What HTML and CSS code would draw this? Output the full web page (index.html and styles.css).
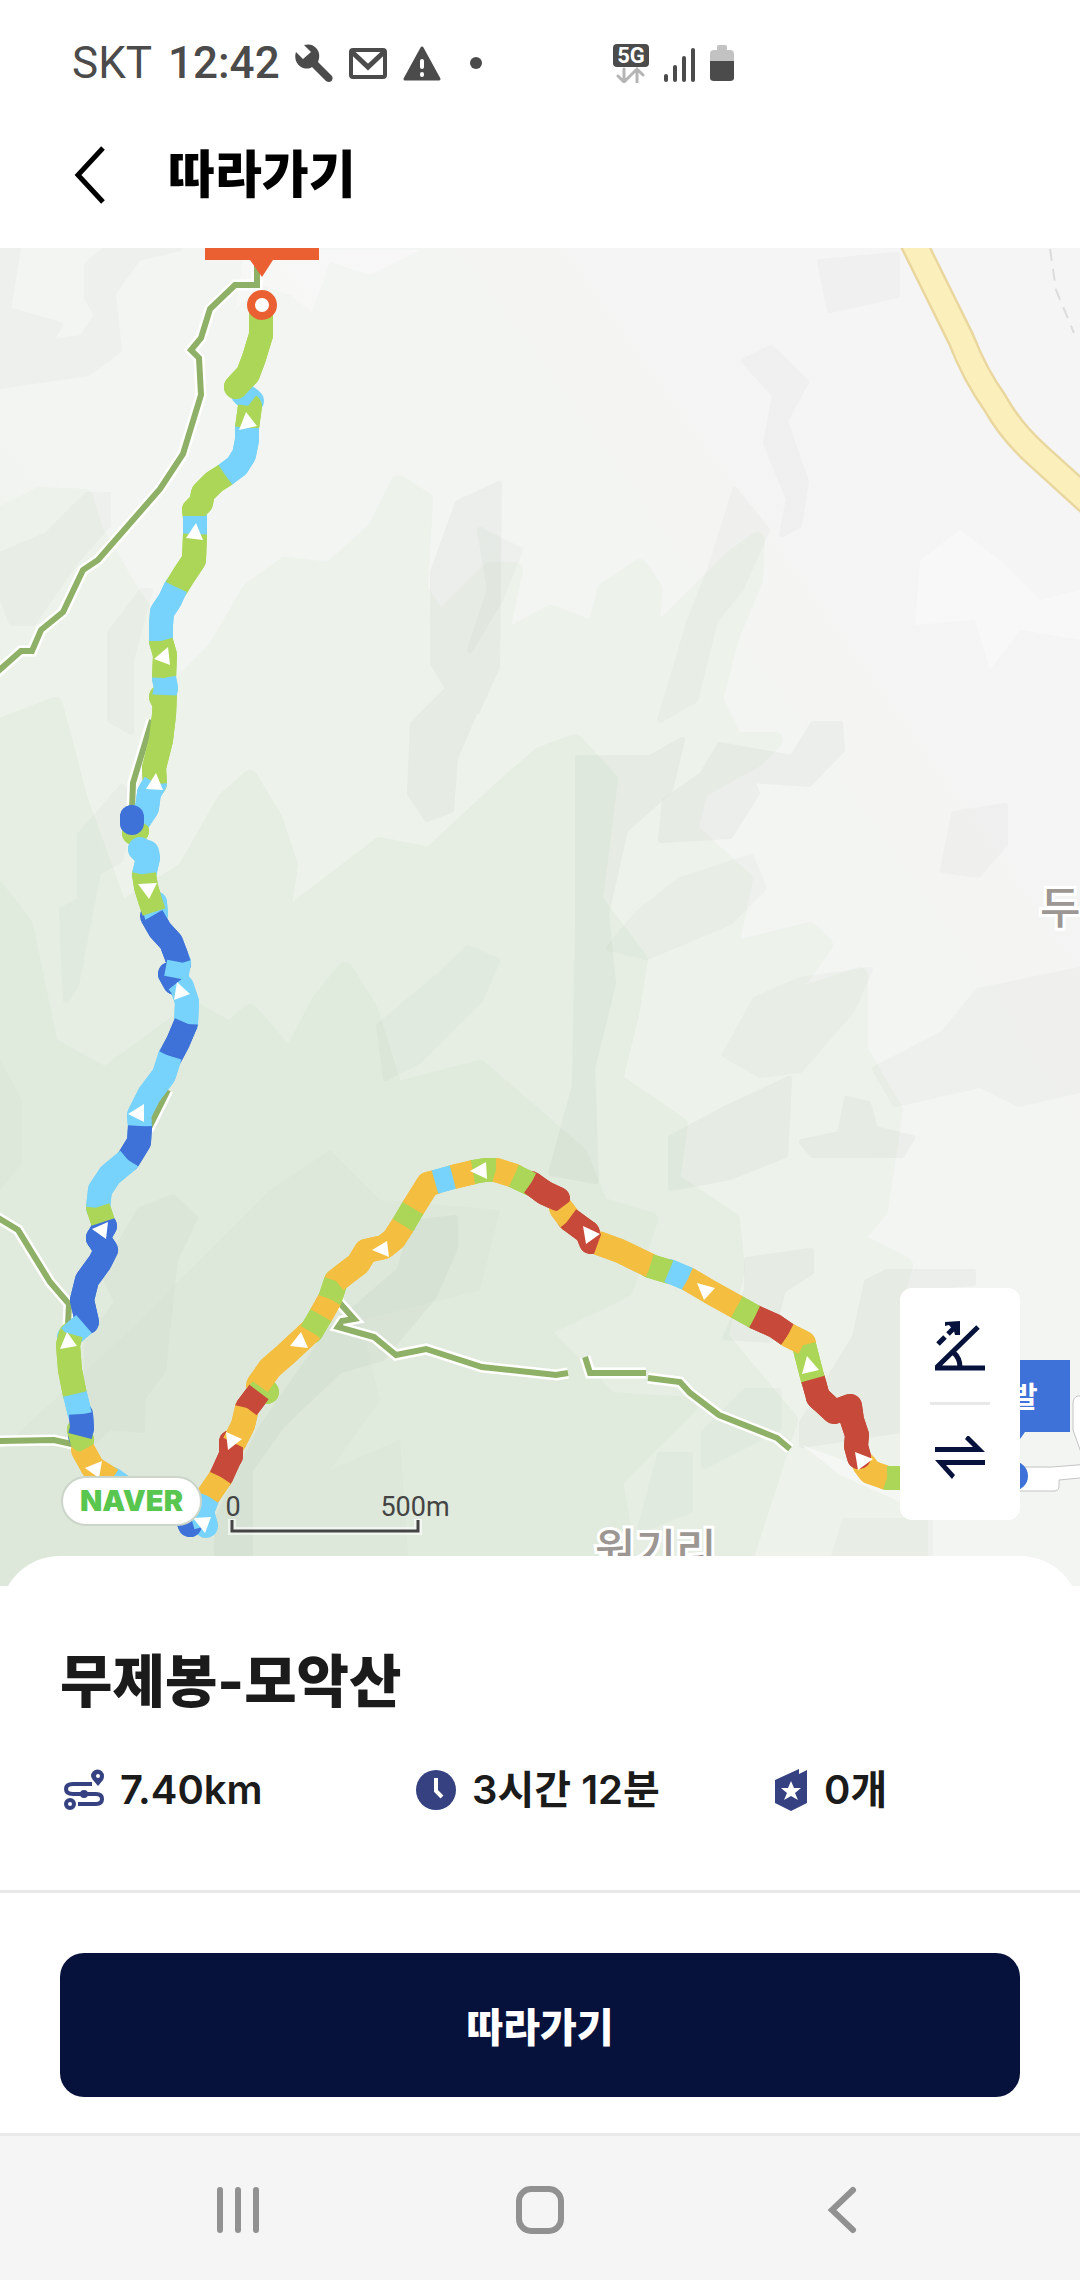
FILE: index.html
```html
<!DOCTYPE html>
<html lang="ko">
  <head>
    <meta charset="UTF-8" />
    <meta name="viewport" content="width=device-width, initial-scale=1.0" />
    <title>따라가기</title>
    <link rel="stylesheet" href="styles.css">
  </head>
  <body>
    <div class="status-bar">
      <span class="carrier">SKT</span>
      <span class="clock">12:42</span>
      <svg class="status-icon" width="40" height="40" viewBox="0 0 40 40">
        <path d="M10 2 L17 9 L9 16 L2 9 C0 15 2 21 7 24 C11 26 15 26 18 24 L32 38 C36 41 40 37 38 33 L24 19 C26 14 26 8 21 4 C18 1 14 1 10 2 Z" fill="#4b4b4b" />
      </svg>
      <svg class="status-icon" width="40" height="40" viewBox="0 0 40 40">
        <rect x="3" y="7" width="34" height="27" rx="2" fill="none" stroke="#4b4b4b" stroke-width="4" />
        <path d="M4 9 L20 24 L36 9" fill="none" stroke="#4b4b4b" stroke-width="5" />
      </svg>
      <svg class="status-icon" width="40" height="40" viewBox="0 0 40 40">
        <path d="M20 5 L37 36 H3 Z" fill="#4b4b4b" stroke="#4b4b4b" stroke-width="3" stroke-linejoin="round" />
        <path d="M20 18 V24 M20 31 V32" stroke="#fff" stroke-width="4" stroke-linecap="round" />
      </svg>
      <span class="dot"></span>
      <div class="status-right">
        <svg width="38" height="40" viewBox="0 0 38 40">
          <rect x="1" y="1" width="36" height="23" rx="4" fill="#4b4b4b" />
          <text x="19" y="20" class="network">5G</text>
          <path d="M12 26 V39 M6 33 L12 39 L18 33 M25 39 V26 M19 32 L25 26 L31 32" fill="none" stroke="#b5b5b5" stroke-width="3" stroke-linecap="round" />
        </svg>
        <svg width="36" height="40" viewBox="0 0 36 40">
          <path d="M4 33 V37 M13 24 V37 M22 15 V37 M31 7 V37" stroke="#4b4b4b" stroke-width="4" stroke-linecap="round" />
        </svg>
        <svg width="24" height="40" viewBox="0 0 24 40">
          <path d="M0 19 V11 Q0 7 4 7 H7 V4 Q7 2 9 2 H15 Q17 2 17 4 V7 H20 Q24 7 24 11 V19 Z" fill="#c2c2c2" />
          <path d="M0 18 H24 V35 Q24 38 20 38 H4 Q0 38 0 35 Z" fill="#4b4b4b" />
        </svg>
      </div>
    </div>

    <header class="header">
      <button class="back-button" aria-label="뒤로">
        <svg width="34" height="60" viewBox="0 0 34 60">
          <path d="M31 3 L6 30 L31 57" fill="none" stroke="#000" stroke-width="5" />
        </svg>
      </button>
      <h1>따라가기</h1>
    </header>

    <main>
      <section class="map">
        <svg class="map-canvas" viewBox="0 248 1080 1338" preserveAspectRatio="xMidYMid slice">
          <defs>
            <linearGradient id="ground" x1="0.900" y1="0.200" x2="0" y2="1">
              <stop offset="0" stop-color="#f4f5f4" />
              <stop offset="0.500" stop-color="#f2f5f1" />
              <stop offset="1" stop-color="#e4ece1" />
            </linearGradient>
          </defs>

          <!-- terrain -->
          <rect y="248" width="1080" height="1338" fill="url(#ground)" />
          <path class="hill low" d="M-10 520 L40 495 L85 497 L95 530 L130 590 L150 620 L175 690 L215 650 L250 590 L285 565 L330 570 L375 530 L399 483 L425 500 L420 590 L440 620 L490 570 L515 570 L500 640 L551 613 L595 630 L605 590 L640 567 L655 590 L650 640 L690 600 L730 560 L757 540 L755 580 L730 640 L715 700 L735 740 L775 740 L755 760 L700 790 L690 830 L745 880 L730 950 L810 930 L825 945 L785 1000 L860 975 L860 1050 L895 1110 L880 1210 L855 1240 L905 1265 L895 1300 L920 1520 L920 1600 L-10 1600 Z" />
          <path class="hill mid" d="M-10 730 L55 705 L80 800 L120 910 L185 870 L225 800 L250 778 L275 820 L290 865 L282 920 L380 845 L430 855 L500 790 L540 755 L575 742 L610 780 L595 900 L640 960 L632 1010 L615 1080 L680 1125 L672 1180 L732 1220 L737 1270 L720 1337 L790 1420 L732 1600 L-10 1600 Z" />
          <path class="hill high" d="M-10 880 L25 925 L50 1045 L105 1075 L195 1010 L230 1030 L250 1012 L290 1058 L320 1000 L345 970 L370 1010 L395 1090 L480 1068 L580 1155 L600 1205 L650 1220 L625 1290 L540 1330 L610 1400 L690 1405 L615 1480 L635 1600 L-10 1600 Z" />
          <path class="hill top" d="M0 1060 L22 1100 L22 1163 L0 1190 Z M130 1330 L270 1190 L330 1150 L380 1200 L500 1210 L480 1290 L360 1320 L380 1400 L330 1470 L400 1440 L410 1586 L0 1586 L0 1450 Z" />
          <path class="shade" d="M458 503 L499 484 L497 667 L477 711 L455 700 L433 663 L433 572 Z M448 689 L475 711 L455 758 L451 810 L427 819 L410 793 L413 724 Z" />
          <path class="shade" d="M720 745 L792 758 L813 724 L840 724 L842 750 L809 784 L751 780 L757 793 L730 836 L661 840 L665 801 L702 775 Z" />
          <path class="shade faint" d="M637 914 L680 880 L751 857 L764 888 L730 922 L647 957 L609 948 Z" />
          <path class="shade" d="M578 758 L650 758 L682 740 L670 790 L625 830 L606 914 L613 983 L592 1069 L596 1181 L551 1173 L575 1086 L578 931 Z" />
          <path class="shade faint" d="M744 361 L771 348 L806 382 L785 421 L806 482 L799 525 L782 534 L789 499 L766 443 L775 395 Z" />
          <path class="shade" d="M671 1138 L727 1108 L789 1079 L785 1155 L730 1177 L709 1181 L671 1188 Z M802 1142 L840 1134 L847 1099 L868 1104 L875 1129 L912 1138 L902 1155 L813 1155 Z" />
          <path class="shade faint" d="M954 814 L1005 806 L1005 844 L978 875 L943 870 Z M875 1069 L943 1034 L978 991 L1080 970 L1080 1090 L1019 1104 L980 1085 L895 1104 Z M755 1000 L800 980 L870 970 L852 1010 L800 1070 L760 1075 L725 1055 Z M820 262 L897 255 L897 295 L830 310 Z" />
          <path class="shade faint" d="M735 490 L767 530 L740 590 L715 620 L695 700 L660 720 L690 620 L710 570 Z M480 530 L520 550 L500 600 L470 650 L490 590 Z" />
          <path class="shade faint" d="M468 948 L497 961 L480 1000 L420 1060 L386 1078 L379 1026 L441 974 Z" />
          <path class="shade faint" d="M0 555 L47 535 L87 495 L108 495 L108 525 L75 562 L33 623 L12 623 L0 593 Z M110 633 L142 591 L150 591 L131 660 L131 732 L110 720 Z M80 835 L122 787 L135 800 L120 860 L98 872 L76 985 L66 1000 L62 910 L80 900 Z" />
          <path class="shade faint" d="M87 265 L107 248 L180 248 L138 258 L113 293 L119 350 L88 373 L0 386 L0 350 L82 338 L97 315 L87 298 Z M0 248 H18 L8 310 L60 325 L50 342 L0 350 Z" />
          <path class="shade faint" d="M173 1197 L195 1218 L175 1260 L163 1370 L143 1397 L142 1430 L110 1427 L87 1447 L87 1343 L117 1302 L103 1273 L140 1210 Z" />
          <path class="shade" d="M413 1223 L455 1218 L455 1248 L434 1296 L382 1358 L340 1370 L282 1425 L250 1470 L250 1586 L217 1586 L217 1520 L260 1430 L330 1330 L400 1270 Z" />
          <path class="shade" d="M747 1260 L811 1251 L811 1272 L783 1290 L770 1340 L726 1337 L747 1290 Z M867 1282 L887 1272 L973 1272 L973 1283 L900 1289 L900 1430 L802 1445 L802 1423 L855 1337 Z" />
          <path class="shade faint" d="M704 1433 L746 1391 L779 1391 L779 1428 L704 1466 Z M660 1455 L690 1455 L690 1510 L640 1530 Z M845 1521 L930 1521 L930 1586 L825 1586 Z" />
          <path class="clearing" d="M802 1445 L870 1470 L900 1480 L900 1502 L840 1475 Z M245 250 L420 250 L370 275 L330 262 L312 312 L290 295 L262 285 L235 310 Z M920 560 L960 530 L1000 560 L1040 600 L1080 590 L1080 640 L1020 630 L990 670 L975 620 L915 625 Z" />

          <!-- roads -->
          <path class="road-edge" d="M912 240 L961 339 Q975 375 995 403 Q1010 430 1035 453 L1090 503" />
          <path class="road" d="M912 240 L961 339 Q975 375 995 403 Q1010 430 1035 453 L1090 503" />
          <path d="M1050 249 L1056 290 L1074 333" fill="none" stroke="#dcdcdc" stroke-width="2" stroke-dasharray="12 8" />
          <path class="alley" d="M1010 1467 H1052 L1090 1464 V1477 L1059 1480 V1486 Q1059 1491 1054 1491 H1010 Z M1090 1396 H1078 Q1073 1397 1073 1404 V1430 L1082 1455 H1090 Z" />

          <!-- trails -->
          <g class="trail-halo">
            <path d="M257 248 V285 H235 L210 309 L201 338 L191 350 L199 358 L201 395 L183 454 L160 489 L98 560 L83 570 L63 612 L41 630 L32 651 L21 651 L-5 674" />
            <path d="M152 720 L133 783 L132 810 M168 1090 L148 1130" />
            <path d="M-5 1216 L18 1230 L50 1282 L69 1304 L68 1325 M-5 1441 L54 1440 L76 1445" />
            <path d="M338 1301 L354 1319 L342 1321 L338 1327 L374 1337 L396 1355 L426 1349 L482 1367 L556 1375 L568 1373" />
            <path d="M585 1357 L590 1373 H646 M648 1378 L680 1382 L690 1393 L719 1415 L777 1438 L790 1449" />
          </g>
          <g class="trail">
            <path d="M257 248 V285 H235 L210 309 L201 338 L191 350 L199 358 L201 395 L183 454 L160 489 L98 560 L83 570 L63 612 L41 630 L32 651 L21 651 L-5 674" />
            <path d="M152 720 L133 783 L132 810 M168 1090 L148 1130" />
            <path d="M-5 1216 L18 1230 L50 1282 L69 1304 L68 1325 M-5 1441 L54 1440 L76 1445" />
            <path d="M338 1301 L354 1319 L342 1321 L338 1327 L374 1337 L396 1355 L426 1349 L482 1367 L556 1375 L568 1373" />
            <path d="M585 1357 L590 1373 H646 M648 1378 L680 1382 L690 1393 L719 1415 L777 1438 L790 1449" />
          </g>

          <text class="place" x="1040" y="924">두</text>
          <text class="place" x="595" y="1566">원기리</text>

          <!-- course, coloured by slope; the rounded copy below fills the bends between segments -->
          <use class="course-base" href="#course" />
          <g id="course" class="course">
            <path class="down" d="M243 394 L252 401" />
            <path class="flat" d="M250 406 L247 428" />
            <path class="flat round" d="M261 312 V335 L254 358 L248 374 L236 387" />
            <path class="down" d="M247 428 V440 L244 455 L237 466 L225 475" />
            <path class="flat" d="M225 475 L214 482 L203 493 L201 503 L194 510 L195 517" />
            <path class="down" d="M195 516 V535" />
            <path class="flat" d="M195 534 L194 560 L184 575 L176 588" />
            <path class="down" d="M176 587 L170 600 L162 612 L161 625 V641" />
            <path class="flat" d="M161 641 L165 655 L164 678" />
            <path class="flat round" d="M161 697 L164 703" />
            <path class="down" d="M164 678 L166 688 L164 697" />
            <path class="flat" d="M165 695 L164 715 L161 740 L154 768 L155 784" />
            <path class="flat round" d="M134 833 L137 831" />
            <path class="down" d="M155 783 L149 793 L147 808 L139 820" />
            <path class="steep-down round" d="M132 817 L132 823" />
            <path class="down round" d="M140 849 L147 856" />
            <path class="down" d="M147 852 L148 858 L144 875" />
            <path class="down round" d="M155 903 L156 914" />
            <path class="flat" d="M144 874 L146 887 L150 900 L154 912" />
            <path class="steep-down" d="M152 916 L160 930 L171 942 L176 955 L179 964" />
            <path class="steep-down round" d="M170 974 L175 983" />
            <path class="down" d="M179 962 L176 978" />
            <path class="down" d="M178 982 L182 987 L187 1002 L186 1024" />
            <path class="steep-down" d="M186 1023 L178 1042 L170 1057" />
            <path class="down" d="M170 1056 L164 1075 L149 1095 L139 1115 L140 1127" />
            <path class="steep-down" d="M140 1126 L139 1142 L128 1160" />
            <path class="down" d="M128 1160 L110 1175 L100 1190 L98 1208" />
            <path class="steep-down round" d="M105 1226 L98 1238" />
            <path class="flat" d="M98 1207 L103 1222" />
            <path class="steep-down round" d="M98 1238 L106 1250 L100 1262 L87 1280 L82 1300 L87 1322" />
            <path class="down" d="M84 1324 L69 1337" />
            <path class="flat" d="M71 1334 L68 1345 L70 1370 L75 1395" />
            <path class="down" d="M75 1394 L80 1415" />
            <path class="flat round" d="M79 1430 L82 1440" />
            <path class="steep-down" d="M81 1414 L82 1428 L80 1436" />
            <path class="up" d="M83 1450 L93 1468 L112 1480" />
            <path class="down" d="M112 1479 L130 1492" />
            <path class="steep-down round" d="M186 1515 L190 1525" />
            <path class="down" d="M208 1496 L202 1512 L206 1526" />
            <path class="up" d="M208 1496 L221 1477" />
            <path class="steep-up round" d="M231 1442 L231 1456" />
            <path class="steep-up" d="M231 1455 L221 1477" />
            <path class="up" d="M234 1443 L243 1425 L247 1408" />
            <path class="flat round" d="M260 1391 L267 1392" />
            <path class="steep-up" d="M247 1408 L259 1392" />
            <path class="up" d="M258 1385 L270 1368 L285 1355 L312 1330" />
            <path class="flat" d="M311 1332 L321 1315" />
            <path class="up" d="M321 1315 L330 1299" />
            <path class="flat" d="M330 1299 L336 1281" />
            <path class="up" d="M336 1281 L346 1273 L358 1264 L366 1251 L384 1247 L394 1239 L403 1225" />
            <path class="flat" d="M403 1225 L413 1208" />
            <path class="up" d="M413 1208 L428 1184 L436 1182" />
            <path class="down" d="M435 1182 L453 1177" />
            <path class="up" d="M453 1177 L474 1172" />
            <path class="flat" d="M473 1172 L485 1170 H496" />
            <path class="up" d="M496 1170 L515 1176" />
            <path class="flat" d="M514 1176 L531 1184" />
            <path class="steep-up round" d="M542 1191 L545 1193 L558 1199" />
            <path class="steep-up" d="M531 1183 L545 1193" />
            <path class="up" d="M561 1208 L570 1220" />
            <path class="steep-up" d="M569 1219 L588 1233" />
            <path class="steep-up round" d="M587 1232 L591 1242" />
            <path class="up" d="M598 1243 L620 1251 L651 1266" />
            <path class="flat" d="M650 1266 L670 1272" />
            <path class="down" d="M669 1271 L688 1279" />
            <path class="up" d="M688 1279 L710 1292 L737 1307" />
            <path class="flat" d="M737 1307 L755 1317" />
            <path class="steep-up" d="M755 1317 L775 1326 L788 1335" />
            <path class="flat" d="M804 1345 L813 1380" />
            <path class="up" d="M788 1335 L804 1343" />
            <path class="up" d="M864 1464 L870 1472 L887 1478" />
            <path class="steep-up round" d="M818 1397 L834 1412 L850 1406 L852 1420 L857 1435 L856 1446 L859 1457" />
            <path class="steep-up" d="M813 1379 L818 1397 L822 1401" />
            <path class="flat" d="M887 1478 H915" />
          </g>

          <!-- direction arrows -->
          <path fill="#fff" d="M246 412 L257 426 L239 430 Z M196 523 L203 540 L186 538 Z M168 647 L154 659 L170 665 Z M156 773 L163 790 L146 789 Z M138 884 L157 883 L149 899 Z M177 982 L190 994 L174 1000 Z M144 1104 L128 1114 L144 1122 Z M92 1229 L108 1222 L106 1239 Z M67 1332 L77 1346 L60 1349 Z M85 1468 L102 1461 L99 1478 Z M193 1518 L211 1517 L205 1533 Z M226 1432 L242 1439 L228 1450 Z M301 1332 L308 1348 L290 1346 Z M387 1241 L372 1250 L389 1257 Z M486 1162 L470 1171 L487 1179 Z M583 1226 L600 1234 L586 1244 Z M697 1283 L715 1288 L704 1300 Z M807 1356 L819 1370 L802 1374 Z M855 1452 L873 1459 L858 1470 Z" />

          <!-- finish and start flags -->
          <path fill="#ea6033" d="M205 240 H319 V260 H273 L262 277 L250 260 H205 Z" />
          <circle cx="262" cy="305" r="11" fill="#fff" stroke="#ea6033" stroke-width="8" />
          <path fill="#3f72d8" d="M956 1360 H1070 V1432 H1025 L1013 1449 L1001 1432 H956 Z" />
          <circle cx="1013" cy="1476" r="11" fill="#fff" stroke="#3f72d8" stroke-width="8" />
          <text class="flag-text" x="1011" y="1408">출발</text>

          <!-- scale -->
          <text class="scale-text" x="233" y="1516">0</text>
          <text class="scale-text" x="415" y="1516">500m</text>
          <path d="M232 1519 V1531 H418 V1519" fill="none" stroke="#fff" stroke-opacity="0.600" stroke-width="8" />
          <path d="M232 1520 V1531 H418 V1520" fill="none" stroke="#444" stroke-width="3" />
        </svg>

        <a class="naver" href="#">NAVER</a>

        <div class="map-controls">
          <button aria-label="경사도">
            <svg width="52" height="52" viewBox="0 0 52 52">
              <path d="M1 48 H51 M3 47 L44 7 M19 32 Q26 38 26 47 M4 24 L11 17 M14 14 L21 7" fill="none" stroke="#06113c" stroke-width="5" />
              <path d="M11 2 L26 1 V15 H21 L20 11 L15 5 L11 6 Z" fill="#06113c" />
            </svg>
          </button>
          <button aria-label="방향 전환">
            <svg width="52" height="52" viewBox="0 0 52 52">
              <path d="M1 16 H51 L34 -1 L31 3 L39 11 H1 Z M51 24 H1 L18 43 L21 39 L12 29 H51 Z" fill="#06113c" />
            </svg>
          </button>
        </div>
      </section>

      <section class="sheet">
        <h2>무제봉-모악산</h2>
        <ul class="stats">
          <li>
            <svg width="48" height="48" viewBox="0 0 48 48">
              <path d="M32 18 H13 Q6 18 6 23 Q6 28 13 28 H36 Q42 28 42 33 Q42 38 36 38 H18" fill="none" stroke="#354180" stroke-width="4" />
              <circle cx="24" cy="28" r="4" fill="#354180" />
              <circle cx="10" cy="38" r="4" fill="none" stroke="#354180" stroke-width="4" />
              <path d="M38 20 L33 14 Q31 11 31 10 A6 6 0 0 1 44 10 Q44 12 43 14 Z" fill="#354180" />
              <circle cx="38" cy="10" r="2" fill="#fff" />
            </svg>
            7.40km
          </li>
          <li>
            <svg width="48" height="48" viewBox="0 0 48 48">
              <circle cx="24" cy="24" r="20" fill="#354180" />
              <path d="M24 12 V25 L30 31" fill="none" stroke="#fff" stroke-width="4" />
            </svg>
            3시간 12분
          </li>
          <li>
            <svg width="48" height="48" viewBox="0 0 48 48">
              <path d="M11 14 L35 3 V8 L43 4 V37 L27 45 L11 37 Z" fill="#354180" />
              <path d="M27 15 L30 22 L37 22 L31 27 L34 34 L27 30 L20 34 L23 27 L17 22 L24 22 Z" fill="#fff" />
            </svg>
            0개
          </li>
        </ul>
      </section>

      <div class="action">
        <button class="follow-button">따라가기</button>
      </div>
    </main>

    <nav class="nav-bar">
      <button aria-label="최근 앱">
        <svg width="52" height="52" viewBox="0 0 52 52">
          <path d="M8 6 V46 M26 6 V46 M44 6 V46" stroke="#919191" stroke-width="6" stroke-linecap="round" />
        </svg>
      </button>
      <button aria-label="홈">
        <svg width="52" height="52" viewBox="0 0 52 52">
          <rect x="5" y="5" width="42" height="42" rx="12" fill="none" stroke="#919191" stroke-width="6" />
        </svg>
      </button>
      <button aria-label="뒤로">
        <svg width="52" height="52" viewBox="0 0 52 52">
          <path d="M37 6 L16 26 L37 46" fill="none" stroke="#919191" stroke-width="6" stroke-linecap="round" />
        </svg>
      </button>
    </nav>
  </body>
</html>
```
FILE: styles.css
```css
* {
  box-sizing: border-box;
}

body {
  margin: 0;
  background-color: #fff;
  color: #1b1b1b;
  font-family: Inter, "Noto Sans CJK KR", sans-serif;
}

button {
  padding: 0;
  border: none;
  background: none;
  font-family: inherit;
  cursor: pointer;
}

svg {
  display: block;
  flex-shrink: 0;
}

/* status bar */
.status-bar {
  display: flex;
  align-items: center;
  height: 106px;
  padding: 20px 72px 0;
  color: #4b4b4b;
  font-family: Roboto, sans-serif;
  font-size: 44px;
}

.clock {
  margin-left: 16px;
  margin-right: 14px;
  font-weight: 500;
}

.status-icon {
  margin-right: 14px;
}

.dot {
  width: 12px;
  height: 12px;
  margin-left: 14px;
  border-radius: 50%;
  background-color: #4b4b4b;
}

.status-right {
  display: flex;
  gap: 12px;
  margin-left: 130px;
}

.network {
  fill: #fff;
  font-size: 22px;
  font-weight: 700;
  text-anchor: middle;
}

/* header */
.header {
  display: flex;
  align-items: center;
  height: 142px;
  padding: 0 72px 4px;
  color: #000;
}

h1 {
  margin: 0 0 0 62px;
  font-size: 51px;
  font-weight: 900;
  line-height: 72px;
}

/* map */
.map {
  position: relative;
}

.map-canvas {
  width: 100%;
  height: auto;
}

.hill {
  stroke-width: 16;
  stroke-linejoin: round;
}

.hill.low {
  fill: #edf2eb;
  stroke: #edf2eb;
}

.hill.mid {
  fill: #e6eee3;
  stroke: #e6eee3;
}

.hill.high {
  fill: #e0eadd;
  stroke: #e0eadd;
}

.hill.top {
  fill: #dce7d8;
  opacity: 0.7;
}

.shade {
  fill: #6e8270;
  stroke: #6e8270;
  stroke-width: 6;
  stroke-linejoin: round;
  opacity: 0.05;
}

.shade.faint {
  opacity: 0.03;
}

.clearing {
  fill: #f8f9f8;
  opacity: 0.7;
}

.road-edge,
.road {
  fill: none;
  stroke: #e9d79f;
  stroke-width: 28;
  stroke-linejoin: round;
}

.road {
  stroke: #fbf0bc;
  stroke-width: 23;
}

.alley {
  fill: #fff;
  stroke: #c4c4c4;
  stroke-width: 1;
}

.trail-halo,
.trail {
  fill: none;
  stroke: #fff;
  stroke-width: 11;
}

.trail {
  stroke: #8fb067;
  stroke-width: 6;
}

.place {
  fill: #9d9793;
  stroke: #fff;
  stroke-width: 6;
  paint-order: stroke;
  font-size: 44px;
  font-weight: 500;
}

.course-base {
  stroke-linecap: round;
}

.course {
  fill: none;
  stroke-width: 24;
  stroke-linejoin: round;
}

.course .round {
  stroke-linecap: round;
}

.flat {
  stroke: #abd657;
}

.down {
  stroke: #77d3fb;
}

.steep-down {
  stroke: #3f72d8;
}

.up {
  stroke: #f4be41;
}

.steep-up {
  stroke: #c74939;
}

.flag-text {
  fill: #fff;
  font-size: 29px;
  font-weight: 700;
  text-anchor: middle;
}

.scale-text {
  fill: #444;
  font-family: Roboto, sans-serif;
  font-size: 27px;
  text-anchor: middle;
}

.naver {
  position: absolute;
  left: 61px;
  bottom: 60px;
  padding: 0 17px;
  border: 2px solid #cbd5c9;
  border-radius: 26px;
  background-color: #fff;
  color: #58c64f;
  font-size: 29px;
  font-weight: 900;
  line-height: 46px;
  text-decoration: none;
}

.map-controls {
  position: absolute;
  right: 60px;
  bottom: 66px;
  width: 120px;
  border-radius: 12px;
  background-color: #fff;
}

.map-controls button {
  display: flex;
  align-items: center;
  justify-content: center;
  width: 100%;
  height: 116px;
}

.map-controls button + button::before {
  content: "";
  position: absolute;
  top: 114px;
  left: 30px;
  right: 30px;
  height: 3px;
  background-color: #e8e8e8;
}

/* course info */
.sheet {
  position: relative;
  margin-top: -30px;
  padding: 84px 60px 76px;
  border-bottom: 3px solid #e8e8e8;
  border-radius: 60px 60px 0 0;
  background-color: #fff;
}

h2 {
  margin: 0;
  font-size: 57px;
  font-weight: 800;
  line-height: 84px;
}

.stats {
  display: grid;
  grid-template-columns: 11fr 11fr 8fr;
  margin: 42px 0 0;
  padding: 0;
  list-style: none;
}

.stats li {
  display: flex;
  align-items: center;
  gap: 12px;
  font-size: 40px;
  font-weight: 600;
  line-height: 48px;
}

.action {
  padding: 60px 60px 36px;
}

.follow-button {
  display: block;
  width: 100%;
  height: 144px;
  border-radius: 24px;
  background-color: #06113c;
  color: #fff;
  font-size: 40px;
  font-weight: 800;
}

/* navigation bar */
.nav-bar {
  display: grid;
  grid-template-columns: repeat(3, 28%);
  justify-content: center;
  padding: 48px 0 44px;
  border-top: 3px solid #e9e9e9;
  background-color: #f5f5f5;
}

.nav-bar button {
  display: flex;
  justify-content: center;
}
```
